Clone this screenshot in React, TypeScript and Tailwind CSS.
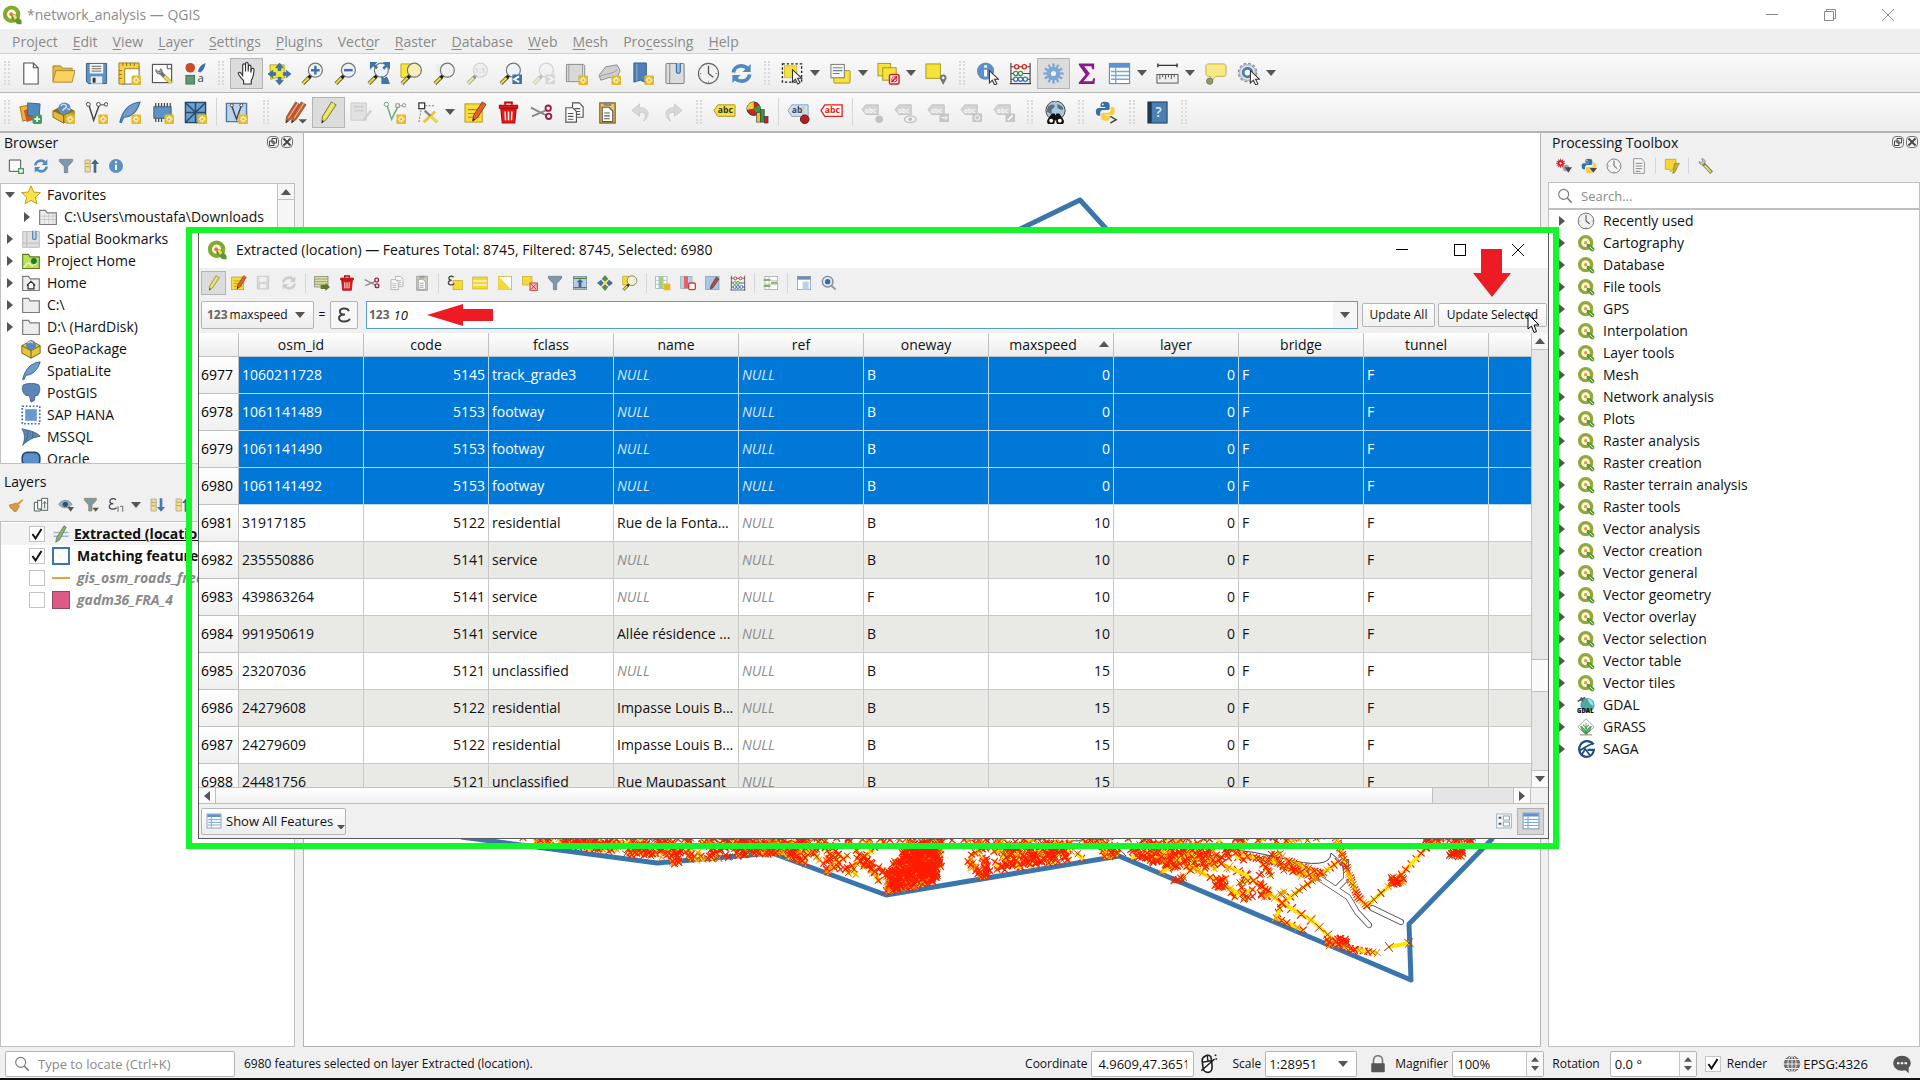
import React from "react";

type IconProps = { name: string; className?: string };

const Badge = () => (
  <g>
    <rect x="14" y="14" width="10" height="10" rx="1" fill="#e3b92e" />
    <path d="M19 15.5v7M15.5 19h7M16.8 16.8l4.4 4.4M21.2 16.8l-4.4 4.4" stroke="#fff9d8" strokeWidth="1.3" />
    <circle cx="19" cy="19" r="1.3" fill="#e3b92e" />
  </g>
);

const Lens = ({ fill = "#eef3f8", ring = "#777" }: { fill?: string; ring?: string }) => (
  <g>
    <path d="M2 22.5l7-7" stroke="#5c5a2a" strokeWidth="4" />
    <path d="M2 22.5l6-6" stroke="#e6dc4a" strokeWidth="2.2" />
    <path d="M8 16.5l3-3" stroke="#222" strokeWidth="3.4" />
    <circle cx="15" cy="8.5" r="7.3" fill={fill} stroke={ring} strokeWidth="1.3" />
  </g>
);

const GreyTag = ({ children }: { children?: React.ReactNode }) => (
  <g>
    <path d="M1 9l4-5h13v10H5z" fill="#d4d4d4" stroke="#c2c2c2" />
    <text x="4" y="12" fontSize="7" fontWeight="700" fill="#f4f4f4" fontFamily="Open Sans, sans-serif">abc</text>
    {children}
  </g>
);

const Gear = ({ cx = 12, cy = 12, r = 7, fill = "#7ea6d3" }: { cx?: number; cy?: number; r?: number; fill?: string }) => (
  <g stroke={fill} strokeWidth={r * 0.34} fill="none">
    {[0, 30, 60, 90, 120, 150].map((a) => (
      <path key={a} d={`M${cx - r * 1.5} ${cy}H${cx + r * 1.5}`} transform={`rotate(${a} ${cx} ${cy})`} />
    ))}
    <circle cx={cx} cy={cy} r={r} fill={fill} stroke="none" />
    <circle cx={cx} cy={cy} r={r * 0.38} fill="#f2f2f2" stroke="none" />
  </g>
);

const Refresh = ({ c = "#4f8ac0" }: { c?: string }) => (
  <g fill="none" stroke={c} strokeWidth="4">
    <path d="M3.500 11c.5-4 4-7 8.500-7 2.500 0 4.500 1 6 2.500" />
    <path d="M20.500 13c-.5 4-4 7-8.500 7-2.500 0-4.500-1-6-2.500" />
    <path d="M21.500 2v8.500H13z" fill={c} stroke="none" />
    <path d="M2.500 22v-8.500H11z" fill={c} stroke="none" />
  </g>
);

const Python = () => (
  <g>
    <path d="M11.500 1c-4 0-5 1.500-5 3.500V7H12v1H4C2 8 1 10 1 12.500S2 17 4 17h2v-3c0-2 1.500-3.500 3.500-3.500h5c1.500 0 2.500-1 2.500-2.500V4.500C17 2 15 1 11.500 1z" fill="#35709f" />
    <path d="M12.500 23c4 0 5-1.500 5-3.500V17H12v-1h8c2 0 3-2 3-4.500S22 7 20 7h-2v3c0 2-1.500 3.500-3.500 3.500h-5C8 13.500 7 14.500 7 16v3.500C7 22 9 23 12.500 23z" fill="#f7cf45" />
    <circle cx="9" cy="4" r="1" fill="#fff" />
  </g>
);

const Pencil = ({ c = "#e6dc4a" }: { c?: string }) => (
  <g>
    <path d="M15 1l5 3-10 15-5 4 .5-6.500z" fill={c} stroke="#6b6b3a" strokeWidth=".9" />
    <path d="M17.500 2.500l-10 15.500" stroke="#fff" strokeOpacity=".55" strokeWidth="1.200" />
    <path d="M5 23l.3-3.300 2.200 1.300z" fill="#333" />
  </g>
);

const FormPencil = () => (
  <g>
    <rect x="1" y="3" width="18" height="19" fill="#f7dd3c" stroke="#b79a1a" />
    <path d="M4 9h12M4 13h12M4 17h12" stroke="#a8901e" strokeWidth="1.200" />
    <path d="M19 1l4 2.500-9 14-5 3.500 1-6z" fill="#e2622a" stroke="#7c3415" strokeWidth=".9" />
    <path d="M9 21l.5-3 2 1.200z" fill="#222" />
  </g>
);

const Trash = () => (
  <g fill="none" stroke="#b00d0d" strokeWidth="1.200">
    <path d="M4 8h16l-1.500 15h-13z" fill="#e01b1b" />
    <path d="M2.500 4.500h19v3h-19z" fill="#e01b1b" />
    <path d="M8.500 4V1.500h7V4" strokeWidth="2" />
    <path d="M8.500 11l.4 9M12 11v9M15.500 11l-.4 9" stroke="#fff" strokeWidth="1.500" />
  </g>
);

const Scissors = () => (
  <g fill="none" strokeWidth="2">
    <path d="M1 7l16 8M2 16l14-6" stroke="#8a8a8a" />
    <circle cx="19" cy="7.500" r="2.800" stroke="#9c2148" />
    <circle cx="19.500" cy="16" r="2.800" stroke="#9c2148" />
  </g>
);

const Doc = ({ x, y, c = "#555" }: { x: number; y: number; c?: string }) => (
  <g stroke={c} strokeWidth="1.200" fill="#fff">
    <path d={`M${x} ${y}h7l4 4v11h-11z`} />
    <path d={`M${x + 2} ${y + 6}h6M${x + 2} ${y + 9}h6M${x + 2} ${y + 12}h6`} />
  </g>
);

const Folder = () => (
  <path d="M2 21V4h7l2 3h11v14z" fill="#ededed" stroke="#7c7c7c" strokeWidth="1.400" />
);

const Cursor = ({ x = 0, y = 0 }: { x?: number; y?: number }) => (
  <path transform={`translate(${x} ${y})`} d="M10 8v13l3-3 2.500 5 2.300-1.200-2.500-4.800h4.300z" fill="#fff" stroke="#333" strokeWidth="1.100" />
);

const icons: Record<string, React.ReactNode> = {
  qgis: (
    <g>
      <circle cx="11.500" cy="11" r="8" fill="#fdfbe6" stroke="#84a92f" strokeWidth="5" />
      <path d="M11 11l5.500.5 7 7.500v4h-5l-7-6.500z" fill="#5d9633" />
      <path d="M12 11.500l4 .5 2.500 3-3 3z" fill="#f2dc5a" />
      <circle cx="11" cy="11" r="2.200" fill="#e8703a" />
    </g>
  ),
  qgisSmall: (
    <g>
      <circle cx="11.500" cy="11.500" r="8" fill="#fdf6d8" stroke="#92a93a" strokeWidth="4.500" />
      <path d="M13 13l4.500.5 5.500 5.500v4h-4l-6-6z" fill="#5d9633" />
      <path d="M17 17l5 5" stroke="#e9efd0" strokeWidth="1.200" />
      <circle cx="11.500" cy="11.500" r="2.300" fill="#e79a4a" />
    </g>
  ),
  newDoc: <path d="M5 1h10l5 5v17H5zM15 1v5h5" fill="#fff" stroke="#555" strokeWidth="1.200" />,
  open: (
    <g stroke="#a88632" strokeWidth="1">
      <path d="M1 20V4h8l2 2.500h10V9" fill="#e8b93e" />
      <path d="M1 20l3-11h20l-3 12H1z" fill="#fbd25c" />
    </g>
  ),
  save: (
    <g>
      <path d="M1.500 1.500h21v21h-19l-2-2z" fill="#5b93c6" stroke="#3b5e80" />
      <rect x="5" y="2" width="14" height="10" fill="#f2f4f6" />
      <path d="M7 4.500h10M7 7h10M7 9.500h10" stroke="#666" />
      <rect x="6" y="15" width="12" height="7.500" fill="#e8edf2" />
      <rect x="8" y="16.500" width="3" height="5" fill="#333" />
    </g>
  ),
  saveGrey: (
    <g>
      <path d="M2 2h17v19H2z" fill="#d6d6d6" stroke="#c2c2c2" />
      <path d="M5 3h11v7H5zM6 14h9v6H6z" fill="#efefef" />
    </g>
  ),
  layout: (
    <g>
      <rect x="5" y="5" width="17" height="18" fill="#fff" stroke="#666" />
      <path d="M1 1h21v6H7v16H1z" fill="#f5cf48" stroke="#9c7e1b" />
      <path d="M5 1v3M9 1v3M13 1v3M17 1v3M1 9h3M1 13h3M1 17h3" stroke="#8a6c12" />
      <Badge />
    </g>
  ),
  layoutMgr: (
    <g>
      <rect x="1.500" y="2.500" width="20" height="19" fill="#fff" stroke="#555" strokeWidth="1.200" />
      <path d="M17 3v4h4" fill="none" stroke="#555" />
      <path d="M9 10l11 11" stroke="#777" strokeWidth="4" />
      <path d="M14 15l7 7" stroke="#e6dc4a" strokeWidth="3" />
      <path d="M5 8c0 4 3 5 5 4s2-4 0-5l-1 3-2-.5z" fill="#aaa" stroke="#666" />
    </g>
  ),
  style: (
    <g>
      <circle cx="6.500" cy="6" r="5" fill="#cc4a26" />
      <path d="M22.500 1c-5 2-7 5-8 9l2.500 1c3-2 5-5 5.500-10z" fill="#3f6fa5" />
      <rect x="2" y="14" width="9" height="9" fill="#5d9a78" stroke="#3d7355" />
      <text x="14" y="21" fontSize="12" fill="#444" fontFamily="Open Sans, sans-serif">a</text>
    </g>
  ),
  hand: (
    <path d="M8 14V3.500c0-2 3-2 3 0V10 2c0-2 2.800-2 2.800 0v8l.2-5.500c.2-1.800 2.700-1.600 2.700.2L16.500 11l.7-3.500c.5-1.500 2.800-1.200 2.600.5-.5 4-.3 8-2.800 11v4H9v-3.500C7 17.500 5 15 3.500 12.500c-.6-1.500 1.300-2.500 2.500-1.200z" fill="#fff" stroke="#333" strokeWidth="1.200" />
  ),
  panSel: (
    <g>
      <path d="M2 3h15v14l-7-1-7 2z" fill="#f5e63a" stroke="#b5a520" />
      <path d="M12 1l4 5h-2.500v3h-3V6H8zM12 24l4-5h-2.500v-3h-3v3H8zM24 12.500l-5-4V11h-3v3h3v2.500zM0 12.500l5-4V11h3v3H5v2.500z" fill="#3f74a8" stroke="#35628f" strokeWidth=".6" />
    </g>
  ),
  zoomIn: <g><Lens /><path d="M15 4v9M10.500 8.500h9" stroke="#3f74a8" strokeWidth="2.600" /></g>,
  zoomOut: <g><Lens /><path d="M10.500 8.500h9" stroke="#3f74a8" strokeWidth="2.600" /></g>,
  zoomFull: (
    <g>
      <Lens />
      <path d="M3 0h8l-2.500 2.500 3 3-2 2-3-3L3 8zM24 0v8l-3-3-3 3-2-2 3-3L16.500 0zM24 23h-9v-9l3 3 2-2 1.500 1.500z" fill="#3f74a8" />
    </g>
  ),
  zoomSel: <g><path d="M1 2h11v14H1z" fill="#f5e63a" stroke="#b5a520" /><Lens fill="#f6f0b8" /></g>,
  zoomLayer: <g><path d="M3 2h9l-3 14-6-1z" fill="#eee" /><Lens fill="#f0f0f0" /></g>,
  zoomNative: (
    <g opacity=".45"><Lens ring="#aaa" fill="#e6e6e6" /><text x="9" y="12" fontSize="8" fill="#888" fontFamily="Open Sans, sans-serif">1:1</text></g>
  ),
  zoomLast: <g><Lens /><rect x="14" y="13" width="10" height="10" fill="#3f74a8" /><path d="M21 15l-5 3 5 3" fill="none" stroke="#fff" strokeWidth="2" /></g>,
  zoomNext: <g opacity=".25"><Lens fill="#eee" /><rect x="14" y="13" width="10" height="10" fill="#888" /><path d="M17 15l5 3-5 3" fill="none" stroke="#fff" strokeWidth="2" /></g>,
  newMap: (
    <g><path d="M1.500 2.500h17v18h-17z" fill="#d8d8d8" stroke="#8a8a8a" /><path d="M4 3v17" stroke="#999" /><path d="M18.500 2.500l2 1v17" fill="none" stroke="#8a8a8a" /><Badge /></g>
  ),
  new3d: (
    <g><path d="M1 14l7-9 12-2 3 6-4 9-7-2-9 3z" fill="#cfcfcf" stroke="#8a8a8a" /><path d="M2 15c6-3 13-2 18-7" fill="none" stroke="#999" /><Badge /></g>
  ),
  bookmarkNew: (
    <g><path d="M3 1h13v21l-6-3-7 2z" fill="#4f7fb5" stroke="#39618e" /><path d="M6 2v18" stroke="#8fb0d3" /><Badge /></g>
  ),
  bookmark: (
    <g><rect x="2" y="1.500" width="19" height="21" rx="1" fill="#dcdcdc" stroke="#7c7c7c" /><path d="M6 2v20" stroke="#888" /><path d="M13 1v9c0 2.500 4 2.500 4 0V1" fill="#9cc1e6" stroke="#3f74a8" strokeWidth="1.300" /></g>
  ),
  clock: (
    <g><circle cx="12" cy="12" r="10.500" fill="#f2f2f2" stroke="#666" strokeWidth="1.200" /><path d="M12 4v8l5 4" fill="none" stroke="#555" strokeWidth="1.400" /><path d="M12 20v1.500M3 12h1.500M19.500 12H21" stroke="#777" /></g>
  ),
  refresh: <Refresh />,
  refreshGrey: <Refresh c="#cdcdcd" />,
  select: (
    <g><rect x="1.500" y="2" width="20" height="19" fill="none" stroke="#222" strokeWidth="1.400" strokeDasharray="2.500 2" /><rect x="3.500" y="4" width="13" height="12" fill="#f5e23a" stroke="#b5a520" strokeWidth=".6" /><Cursor x={2} /></g>
  ),
  selectValue: (
    <g><rect x="5" y="9" width="17" height="13" rx="1" fill="#f5e23a" stroke="#a8951b" /><rect x="2" y="2.500" width="14" height="14" fill="#f6f6f6" stroke="#777" /><path d="M4 6h10M4 9h10M4 12h7" stroke="#6d7fa5" strokeWidth="1.200" /></g>
  ),
  deselect: (
    <g stroke="#a8951b"><rect x="1" y="1.500" width="13" height="13" fill="#f5e23a" /><rect x="6" y="6" width="14" height="13" fill="#f5e23a" /><rect x="13" y="13" width="10" height="10" rx="2" fill="#fff" stroke="#c22" strokeWidth="1.500" /><path d="M15 21l6-6" stroke="#c22" strokeWidth="1.600" /><circle cx="18" cy="18" r="2.800" fill="none" stroke="#c22" /></g>
  ),
  selectLoc: (
    <g><rect x="1" y="2" width="15" height="15" fill="#f5e23a" stroke="#a8951b" /><path d="M19 24c-2-4-3.500-5.500-3.500-7.500a3.500 3.500 0 017 0c0 2-1.500 3.500-3.500 7.500z" fill="#777" /><circle cx="19" cy="16.500" r="1.400" fill="#fff" /></g>
  ),
  identify: (
    <g><circle cx="10" cy="9.500" r="9" fill="#5f8fc4" /><path d="M10 8v7M10 3.500v2.500" stroke="#fff" strokeWidth="3" /><Cursor x={4} y={1} /></g>
  ),
  abacus: (
    <g fill="none" stroke="#444" strokeWidth="1.200"><path d="M2 1v22M22 1v22M2 5h20M2 12h20M2 18h20M1 22.500h22" /><g strokeWidth="1.400"><circle cx="8" cy="5" r="2.200" stroke="#d22" fill="#fff" /><circle cx="16" cy="5" r="2.200" stroke="#d22" fill="#fff" /><circle cx="7" cy="12" r="2.200" stroke="#3a9b3a" fill="#fff" /><circle cx="12" cy="12" r="2.200" stroke="#3a9b3a" fill="#fff" /><circle cx="7" cy="18" r="2.200" stroke="#3b6fb5" fill="#fff" /><circle cx="12" cy="18" r="2.200" stroke="#3b6fb5" fill="#fff" /><circle cx="17" cy="18" r="2.200" stroke="#3b6fb5" fill="#fff" /></g></g>
  ),
  gear: <Gear r={7} />,
  sigma: <path d="M4 1.500h16v6h-2l-1-3H9.500l6 7.500-6.500 8H18l1.200-3H21l-.8 6H4v-1.500L11 13 4 3z" fill="#8a1a8a" />,
  table: (
    <g><rect x="1.500" y="1.500" width="21" height="21" fill="#fff" stroke="#6d8fb5" strokeWidth="1.200" /><rect x="2" y="2" width="20" height="4" fill="#5b93d6" /><path d="M8 6v16M3 10h19M3 14h19M3 18h19" stroke="#7ba6da" strokeWidth="1.500" /></g>
  ),
  measure: (
    <g><path d="M2 3.500h20M2 1.500v4M22 1.500v4" stroke="#333" strokeWidth="1.500" /><rect x="1" y="13" width="22" height="9" fill="#eee" stroke="#555" /><path d="M4 13v5M7 13v3M10 13v5M13 13v3M16 13v5M19 13v3" stroke="#555" /></g>
  ),
  tip: (
    <g><path d="M5 2h15c2 0 3 1 3 2.500V12c0 2-1 3-3 3h-8l-5 6v-6H5c-2 0-3-1-3-3V4.500C2 3 3 2 5 2z" fill="#f7ea86" stroke="#bfae45" /><circle cx="6" cy="20" r="3.300" fill="#8b9f5a" stroke="#777" /></g>
  ),
  action: (
    <g>
      <circle cx="11" cy="11" r="9.500" fill="#e4e7ea" stroke="#8d959d" strokeWidth="1.500" strokeDasharray="3 2" />
      <circle cx="11" cy="11" r="8.200" fill="none" stroke="#9aa3ab" />
      <circle cx="11" cy="11" r="4.500" fill="#fff" stroke="#4f7fb5" strokeWidth="3" />
      <Cursor x={4} y={1} />
    </g>
  ),
  dsm: (
    <g><path d="M1 6l11-2 2 14-10 3z" fill="#f0b33a" stroke="#a97714" /><path d="M5 10l9-3 3 12-9 3z" fill="#c9552b" /><path d="M9 2l13 1-1 14-12-2z" fill="#4f8ac0" stroke="#3a648c" /><rect x="14" y="14" width="10" height="10" rx="2" fill="#3f9b63" /><path d="M19 16v6M16 19h6" stroke="#fff" strokeWidth="1.800" /></g>
  ),
  geopkgNew: (
    <g><path d="M1 10l11-6 11 6-11 6z" fill="#8a6c12" /><circle cx="13" cy="8" r="6.500" fill="#5b8fc6" /><path d="M9 5c2-2 5-2 6 0s-3 3-4 5M16 8l3 1" stroke="#cfe2f3" strokeWidth="1.500" fill="none" /><path d="M1 10l11 5v8L1 17z" fill="#e5b93a" stroke="#8a6c12" /><path d="M23 10l-11 5v8l11-6z" fill="#c99e24" stroke="#8a6c12" /><Badge /></g>
  ),
  shape: <g><path d="M4 4l5 16 6-16" fill="none" stroke="#444" strokeWidth="1.500" /><path d="M15 4h7" stroke="#444" /><circle cx="3.500" cy="3.500" r="2" fill="#fff" stroke="#444" /><circle cx="14" cy="3.500" r="2" fill="#fff" stroke="#444" /><circle cx="22" cy="3.500" r="1.800" fill="#fff" stroke="#444" /><Badge /></g>,
  feather: <path d="M23 1C13 2 5 9 2 22l1.500.5L6 17c8 0 14-6 17-16z" fill="#6f9ccc" stroke="#3f6a94" strokeWidth="1.200" />,
  featherNew: <g><path d="M23 1C13 2 5 9 2 22l1.500.5L6 17c8 0 14-6 17-16z" fill="#6f9ccc" stroke="#3f6a94" strokeWidth="1.200" /><Badge /></g>,
  chip: <g><rect x="3" y="6" width="18" height="12" fill="#5b93c6" stroke="#3b5e80" /><path d="M5 6V2M8 6V2M11 6V2M14 6V2M17 6V2M20 6V2M5 22v-4M8 22v-4M11 22v-4" stroke="#444" strokeWidth="1.300" /><Badge /></g>,
  mesh: <g><rect x="1.500" y="1.500" width="21" height="21" fill="#6da0d0" stroke="#274a6b" strokeWidth="1.500" /><path d="M2 12h20M12 2v20M2 2l10 10M22 2L12 12M2 22l10-10" stroke="#274a6b" strokeWidth="1.500" /><Badge /></g>,
  virtual: <g><path d="M1.500 2.500h21v19h-21z" fill="#b8d4ee" stroke="#4f7aa3" strokeWidth="1.500" /><path d="M7 5l5 14 5-14" fill="none" stroke="#444" strokeWidth="1.500" /><circle cx="7" cy="4.500" r="1.600" fill="#fff" stroke="#444" /><circle cx="17" cy="4.500" r="1.600" fill="#fff" stroke="#444" /><Badge /></g>,
  pencils: <g><g transform="translate(-3 0)"><Pencil c="#d4552a" /></g><g transform="translate(3 0)"><Pencil c="#d4552a" /></g><path d="M15 19h9l-4.500 4.500z" fill="#555" /></g>,
  pencil: <Pencil />,
  saveEdits: <g><path d="M1 2h16v18H1z" fill="#e2e2e2" stroke="#cdcdcd" /><path d="M4 6h10M4 10h10" stroke="#cfcfcf" strokeWidth="2" /><path d="M21 9l2 2-8 9-3 1z" fill="#cfcfcf" /></g>,
  vertex: <g><path d="M4 4l5 15 7-14" fill="none" stroke="#6fae8c" strokeWidth="1.600" /><path d="M16 5h6" stroke="#999" /><circle cx="3.500" cy="3.500" r="2.200" fill="#fff" stroke="#5b9b78" /><rect x="13.500" y="3" width="3.500" height="3.500" fill="#fff" stroke="#888" /><circle cx="22" cy="4.500" r="1.800" fill="#fff" stroke="#888" /><Badge /></g>,
  vertexTool: <g><path d="M3 22L6 5h14" fill="none" stroke="#777" strokeDasharray="2 1.500" /><rect x="3" y="2" width="6" height="6" fill="#fff" stroke="#333" strokeWidth="1.300" /><path d="M8 22l12-11" stroke="#e6c93a" strokeWidth="3" /><path d="M9 10l13 12" stroke="#888" strokeWidth="2.600" /><path d="M15 16l7 6" stroke="#e6dc4a" strokeWidth="3" /></g>,
  form: <FormPencil />,
  trash: <Trash />,
  cut: <Scissors />,
  copy: <g><Doc x={10} y={2} /><Doc x={3} y={7} /></g>,
  copyGrey: <g opacity=".7"><Doc x={10} y={2} c="#888" /><Doc x={3} y={7} c="#888" /></g>,
  paste: <g><rect x="4" y="2" width="16" height="21" fill="#e8c75a" stroke="#7c6420" strokeWidth="1.300" /><rect x="8" y="1" width="8" height="4" fill="#888" /><Doc x={6.500} y={6.500} /></g>,
  pasteGrey: <g opacity=".75"><rect x="4" y="2" width="16" height="21" fill="#c9c4b0" stroke="#888" strokeWidth="1.300" /><rect x="8" y="1" width="8" height="4" fill="#888" /><Doc x={6.500} y={6.500} c="#777" /></g>,
  undo: <path d="M11 3L3 10l8 6v-4c6-1 8 3 4 9 7-5 7-14-4-14z" fill="#d8d8d8" stroke="#cbcbcb" />,
  redo: <path d="M13 3l8 7-8 6v-4c-6-1-8 3-4 9-7-5-7-14 4-14z" fill="#d8d8d8" stroke="#cbcbcb" />,
  labelY: <g><path d="M1 10l4-6h18v12H5z" fill="#f5e13a" stroke="#a8951b" /><text x="5" y="13" fontSize="9" fontWeight="700" fill="#333" fontFamily="Open Sans, sans-serif">abc</text></g>,
  diagram: <g><circle cx="8" cy="8" r="7" fill="#d32020" stroke="#333" /><path d="M8 8V1A7 7 0 001 9z" fill="#e9d23a" /><path d="M8 8l6-4a7 7 0 01-3 10z" fill="#2f9b3b" /><rect x="11" y="12" width="4" height="10" fill="#e9c22f" stroke="#333" strokeWidth=".6" /><rect x="15" y="9" width="4" height="13" fill="#2f9b3b" stroke="#333" strokeWidth=".6" /><rect x="19" y="16" width="4" height="7" fill="#d32020" stroke="#333" strokeWidth=".6" /></g>,
  labelPin: <g><path d="M1 10l4-6h17v12H5z" fill="#cfe0f2" stroke="#7ba0c8" /><text x="5" y="13" fontSize="9" fontWeight="700" fill="#444" fontFamily="Open Sans, sans-serif">ab</text><path d="M17 4v12" stroke="#ccc" strokeWidth="2.500" /><circle cx="18.500" cy="19" r="4.500" fill="#b32020" stroke="#701010" /></g>,
  labelR: <g><path d="M1 10l4-6h18v12H5z" fill="#fff" stroke="#e02020" strokeWidth="1.400" /><text x="5" y="13" fontSize="9" fontWeight="700" fill="#e02020" fontFamily="Open Sans, sans-serif">abc</text></g>,
  tag1: <GreyTag><circle cx="19" cy="19" r="4" fill="#c2c2c2" /></GreyTag>,
  tag2: <GreyTag><ellipse cx="17" cy="19" rx="6" ry="3.500" fill="#efefef" stroke="#c2c2c2" strokeWidth="1.500" /><circle cx="17" cy="19" r="1.800" fill="#bbb" /></GreyTag>,
  tag3: <GreyTag><rect x="13" y="13" width="10" height="9" fill="#c6c6c6" /><path d="M15 17.500h6m-2-2l2 2-2 2" stroke="#fff" fill="none" /></GreyTag>,
  tag4: <GreyTag><rect x="13" y="13" width="10" height="9" fill="#c6c6c6" /><circle cx="18" cy="17.500" r="2.500" stroke="#fff" fill="none" /></GreyTag>,
  tag5: <GreyTag><rect x="13" y="13" width="10" height="9" fill="#c6c6c6" /><path d="M15.500 20l5-5" stroke="#fff" strokeWidth="1.500" /></GreyTag>,
  globeSearch: <g><circle cx="12" cy="10" r="10" fill="#a9c6dd" stroke="#444" /><path d="M4 6c3-3 6-3 7-1s-4 3-3 6-3 2-5 0M14 3c3 1 6 3 6 5s-4 1-6-1z" fill="#5f6f78" /><path d="M8 13h3l1 2 1-2h3l4 6a4 4 0 11-7 1h-2a4 4 0 11-7-1z" fill="#111" /><circle cx="7.500" cy="20.500" r="2" fill="#fff" /><circle cx="16.500" cy="20.500" r="2" fill="#fff" /></g>,
  python: <g><g transform="scale(.9)"><Python /></g><path d="M16 16l6 3.500-6 3.500" fill="none" stroke="#444" strokeWidth="1.500" /></g>,
  pythonSmall: <g><Python /><path d="M13 15h11l-5.500 7z" fill="#4a4a4a" /></g>,
  help: <g><rect x="2" y="1" width="20" height="22" fill="#4a80b5" stroke="#22384d" /><path d="M2 1h4v22H2z" fill="#22384d" /><text x="10" y="17" fontSize="14" fontWeight="600" fill="#e5eef7" fontFamily="Open Sans, sans-serif">?</text></g>,
  addLayer: <g><path d="M2 3h17v17H2z" fill="#fafafa" stroke="#4d5a52" strokeWidth="1.500" /><rect x="16" y="16" width="7" height="7" fill="#fff" stroke="#4f9b63" strokeWidth="2" /></g>,
  filter: <path d="M2 2h20v3l-7.500 8v9h-5v-9L2 5z" fill="#7f97ad" stroke="#64798d" />,
  filterArrow: <g><path d="M2 2h18v3l-6.500 7v9h-5v-9L2 5z" fill="#7f97ad" stroke="#8b8b45" /><path d="M14 16h10l-5 6z" fill="#555" /></g>,
  collapse: <g><path d="M3 3h8v18H3z" fill="#f3df84" stroke="#999" /><path d="M4 8h6M4 13h6" stroke="#888" /><path d="M16 22V9h-4l6-7 6 7h-4v13z" fill="#46678c" /></g>,
  expand: <g><path d="M3 3h8v18H3z" fill="#f3df84" stroke="#999" /><path d="M4 8h6M4 13h6" stroke="#888" /><path d="M16 2v13h-4l6 7 6-7h-4V2z" fill="#4a76ac" /></g>,
  info: <g><circle cx="12" cy="12" r="10.500" fill="#5b90c6" /><path d="M12 10v8M12 5v3" stroke="#fff" strokeWidth="3" /></g>,
  star: <path d="M12 1l3.300 7.500 8 .7-6 5.400 1.800 8L12 18.500l-7.100 4.100 1.800-8-6-5.400 8-.7z" fill="#fbe24a" stroke="#b29a1c" strokeWidth="1.100" />,
  folder: <Folder />,
  folderLines: <g><Folder /><path d="M3 11h18M3 15h18M8 8v12M13 8v12M18 8v12" stroke="#c4c4c4" /></g>,
  projHome: <g><path d="M2 21V4h7l2 3h11v14z" fill="#b8e05a" stroke="#5c7a2a" strokeWidth="1.300" /><path d="M3 20l6-6 4 4 6-3" stroke="#f3f3c0" strokeWidth="1.500" fill="none" /><circle cx="15.500" cy="12" r="3.500" fill="#1f7a2a" /></g>,
  home: <g><Folder /><path d="M7 15l5-5 5 5M8.500 14v5h7v-5" fill="#fff" stroke="#333" strokeWidth="1.500" /></g>,
  spatialBm: <g><path d="M2 3h20v19H2z" fill="#dedede" stroke="#b5b5b5" /><path d="M7 4v17M2 17h20" stroke="#b5b5b5" /><path d="M14 2v9c0 2 4 2 4 0V2" fill="#bfd6ee" stroke="#5c86b5" strokeWidth="1.500" /></g>,
  cube: <g><path d="M1 8l11-6 11 6v9l-11 6L1 17z" fill="#e5c53a" stroke="#5d5215" /><path d="M12 14v9M1 8l11 6 11-6" stroke="#5d5215" fill="none" /><circle cx="12" cy="7.500" r="6" fill="#5a86b8" /><path d="M8 5c2-2 5-2 6 0" stroke="#d6e4f2" fill="none" strokeWidth="1.500" /></g>,
  elephant: <path d="M3 2c6-2 13-2 18 0 3 4 1 10-1 13h-3l-1 6-4 2-2-8H6C2 12 0 6 3 2z" fill="#5b86b5" stroke="#3a5d84" />,
  sap: <g><rect x="5" y="5" width="14" height="14" fill="#6a9bd0" /><rect x="1.500" y="1.500" width="21" height="21" fill="none" stroke="#3b6aa0" strokeWidth="2" strokeDasharray="2 2.200" /></g>,
  mssql: <g><path d="M1 2c5 2 15 2 22 9l-8 2c-5 2-9 5-13 9 3-7 3-14-1-20z" fill="#5b86b5" stroke="#3a5d84" /><path d="M8 4c1 5 0 9-3 14M14 6c1 3 0 5-1 8" stroke="#3a5d84" fill="none" /></g>,
  oracle: <rect x="1.500" y="4" width="21" height="16" rx="6" fill="#5b90c8" stroke="#274a75" strokeWidth="2" />,
  brush: <g><path d="M14 9l8-6 1 2-7 7z" fill="#d39a3a" /><path d="M2 12l11-3 4 5-5 8-4-1-1-3-3-1z" fill="#e0973f" stroke="#b0702a" /></g>,
  groups: <g fill="#f7f7f7" stroke="#4d5a52" strokeWidth="1.400"><path d="M2 8h9v13H2z" /><path d="M7 5h9v13H7z" /><path d="M13 2h9v18h-9z" /><path d="M17.500 17V7M15 10l2.500-3 2.500 3" /></g>,
  eye: <g><path d="M1 11C6 3 16 3 21 11 16 18 6 18 1 11z" fill="#9ab0c4" stroke="#6d7a86" /><circle cx="11" cy="11" r="4" fill="#2f4f74" /><path d="M14 15h10l-5 7z" fill="#555" /></g>,
  eps: <g><path d="M12 4C8 1 2 3 3 7c0 2 2 3 5 3-4 0-6 2-6 4.500C2 18 8 20 13 16" fill="none" stroke="#444" strokeWidth="1.800" /><path d="M15 22v-8M18 14h4v8" fill="none" stroke="#888" strokeWidth="2" /></g>,
  toolGear: <g><Gear cx={7} cy={8} r={4.500} fill="#d81f2a" /><circle cx="15" cy="15" r="5" fill="#9aa4ad" /><path d="M13 14h11l-5.500 8z" fill="#4a4a4a" /></g>,
  log: <g><path d="M4 1h12l4 5v17H4z" fill="#f5f5f5" stroke="#888" strokeWidth="1.300" /><path d="M7 8h10M7 12h10M7 16h10M7 20h7" stroke="#888" strokeWidth="1.500" /></g>,
  editPlace: <g><path d="M2 2h16v15h-6l-2 4-2-4H2z" fill="#f4d436" stroke="#bf9a1a" /><path d="M16 8h7l-7 14-3 1z" fill="#c8b02c" stroke="#8f7a1c" /></g>,
  wrench: <g><path d="M3 5c0 4 3 6 6 5l3-3C13 4 11 1 7 1l2 4-3 2z" fill="#c8c8c8" stroke="#777" /><path d="M10 9l12 13" stroke="#77775a" strokeWidth="5.500" /><path d="M11.500 11L21 21.500" stroke="#dfe26a" strokeWidth="3" /></g>,
  search: <g fill="none" stroke="#777" strokeWidth="1.700"><circle cx="10" cy="9.500" r="7.500" /><path d="M15.500 15l6.500 7" strokeWidth="2.300" /></g>,
  gdal: <g><circle cx="14" cy="12" r="9.500" fill="#4fa8a8" /><path d="M14 3c6 1 8 6 8 10-3-1-6-3-8-10z" fill="#a9dde0" /><path d="M1 7l10-5M5 2l3 5" stroke="#555" strokeWidth="2.300" /><text x="0" y="22" fontSize="8" fontWeight="800" fill="#111" fontFamily="Open Sans, sans-serif">GDAL</text></g>,
  grass: <g><path d="M12 1l11 11-11 10L1 12z" fill="#fff" stroke="#8a8a8a" /><path d="M12 21V6M12 21C11 15 8 12 5 11c1 5 3 8 7 10 4-2 6-5 7-10-3 1-6 4-7 10M12 15c-1-4-2-5-4-6M12 15c1-4 2-5 4-6" fill="#63b45a" stroke="#2f8a35" /><path d="M4 22.500h16" stroke="#555" /></g>,
  saga: <g fill="none" stroke="#1f5080" strokeWidth="3"><path d="M22 6A10.500 10.500 0 1012 22.500c6 0 10-4 10.500-9.500H14" /><path d="M3 14C8 12 12 8 20 5M6 20l5-8 6 8" strokeWidth="2.300" /></g>,
  lineEdit: <g><path d="M2 10h20M2 15h20" stroke="#9bb5cf" strokeWidth="2" /><path d="M16 1l3 2-9 17-5 3 1-6z" fill="#8fae72" stroke="#5c7a4c" /></g>,
  multiEdit: <g><rect x="1" y="2" width="20" height="16" fill="#d9dfa5" stroke="#777" /><path d="M1 6h20M1 10h20M1 14h20" stroke="#8a8a4a" /><path d="M10 15h7v-3l7 6-7 6v-3h-7z" fill="#5c7a2a" /></g>,
  epsSel: <g><rect x="9" y="8" width="14" height="14" fill="#f5d93a" stroke="#c9a71b" /><path d="M10 3C7 1 2 2 3 5c0 2 1 3 4 3-3 0-5 1-5 4 0 3 5 4 9 1" fill="none" stroke="#444" strokeWidth="2" /></g>,
  selAll: <g><rect x="1" y="3" width="22" height="18" fill="#f5d93a" /><path d="M1 9h22M1 15h22" stroke="#fff7c4" strokeWidth="2" /><path d="M1 3h22v18H1z" fill="none" stroke="#c9a71b" /></g>,
  invert: <g><rect x="2" y="2" width="20" height="20" fill="#fff" stroke="#c9a71b" /><path d="M2 2l20 20H2z" fill="#f5d93a" /></g>,
  deselSmall: <g><rect x="1" y="2" width="14" height="13" fill="#f5d93a" stroke="#c9a71b" /><rect x="12" y="12" width="11" height="11" fill="#f7b8b8" stroke="#d43a3a" strokeWidth="1.500" /><path d="M14 14l7 7M21 14l-7 7" stroke="#d43a3a" strokeWidth="1.500" /></g>,
  moveTop: <g><rect x="2" y="2" width="20" height="20" fill="#b8cde2" stroke="#64839f" /><path d="M2 5h20M2 19h20" stroke="#5d7f3c" strokeWidth="2" /><path d="M12 6l5 5h-3v7h-4v-7H7z" fill="#3a6496" /></g>,
  panRow: <g><path d="M12 0l5 6-5 4-5-4zM12 24l5-6-5-4-5 4z" fill="#5c8a4a" /><path d="M24 12l-6 5-4-5 4-5zM0 12l6 5 4-5-4-5z" fill="#4d6f94" /><circle cx="12" cy="12" r="3" fill="#e4d95a" /></g>,
  zoomRow: <g><path d="M1 2h10v13H1z" fill="#f5d93a" stroke="#b5a520" /><Lens fill="#f4f0d0" /></g>,
  newField: <g><rect x="1" y="2" width="17" height="18" fill="#fff" stroke="#8aa" /><path d="M6 2v18M12 2v18M1 8h17M1 14h17" stroke="#8ab" /><path d="M6 2h6v18H6z" fill="#a7cc7a" /><rect x="13" y="13" width="10" height="10" fill="#e3b92e" /></g>,
  delField: <g><rect x="1" y="2" width="17" height="18" fill="#b8d0ea" stroke="#8aa" /><path d="M6 2h6v18H6z" fill="#e86060" /><rect x="13" y="12" width="10" height="10" rx="2" fill="#fff" stroke="#d43a3a" strokeWidth="2" /></g>,
  editField: <g><rect x="1" y="2" width="20" height="20" fill="#a9c6e6" stroke="#7b98b5" /><path d="M17 3l4 3-9 13-4 2 1-5z" fill="#b84a3a" stroke="#5a2d24" /></g>,
  dock: <g><rect x="3" y="2" width="19" height="20" fill="#fff" stroke="#999" /><path d="M3 8h19M3 14h19M9 2v20" stroke="#aaa" /><path d="M1 6h10v3H1zM12 10h9v3h-9zM1 15h10v3H1z" fill="#8aab6a" /></g>,
  condFmt: <g><rect x="2" y="2" width="20" height="20" fill="#fff" stroke="#889" /><rect x="2" y="2" width="20" height="5" fill="#6c8fb8" /><rect x="10" y="10" width="9" height="12" fill="#b8d0ea" /></g>,
  zoomAct: <g><circle cx="10" cy="10" r="8" fill="#dfe8f2" stroke="#7c8a99" strokeWidth="2" /><circle cx="10" cy="10" r="4" fill="#3a6aa5" /><path d="M15 15l7 7" stroke="#999" strokeWidth="3" /></g>,
  formView: <g><rect x="1" y="1.500" width="22" height="21" fill="#f4f8fb" stroke="#93aabd" strokeWidth="1.300" /><path d="M4 7h4M4 16h4" stroke="#556" strokeWidth="3" /><rect x="11" y="4.500" width="9" height="6" fill="#fff" stroke="#8aa4b9" strokeWidth="1.500" /><rect x="11" y="13.500" width="9" height="6" fill="#fff" stroke="#8aa4b9" strokeWidth="1.500" /></g>,
  mouse: <g><path d="M8 3c4-3 8-1 8 3l1 9c0 4-2 7-5 7s-6-2-6-6l-1-8c0-2 1-4 3-5z" fill="#fff" stroke="#222" strokeWidth="2" /><path d="M5 10l11-2M11 1l1 8M4 20l16-14M20 2l2-1M21 6h2" stroke="#222" strokeWidth="1.800" /></g>,
  lock: <g><path d="M6 12V7c0-8 12-8 12 0v5" fill="none" stroke="#777" strokeWidth="2.200" /><rect x="3" y="11" width="18" height="12" rx="1" fill="#555" /></g>,
  globe: <g><circle cx="12" cy="12" r="11" fill="#6f6f6f" /><path d="M1 12h22M12 1v22M3 6h18M3 18h18" stroke="#efefef" strokeWidth="1.300" /><ellipse cx="12" cy="12" rx="5.500" ry="11" fill="none" stroke="#efefef" strokeWidth="1.300" /></g>,
  bubble: <g><path d="M12 2c6 0 10.500 4 10.500 9 0 2-1 4-2.500 5.500V23l-4-3.500c-1 .3-2.500.5-4 .5-6 0-10.500-4-10.500-9S6 2 12 2z" fill="#555" /><path d="M6 11h3M10.500 11h3M15 11h3" stroke="#fff" strokeWidth="2.500" /></g>,
};

const Icon = ({ name, className = "size-6" }: IconProps) => (
  <svg viewBox="0 0 24 24" aria-hidden="true" className={`shrink-0 ${className}`}>
    {icons[name]}
  </svg>
);

const Down = ({ className = "w-2.5" }: { className?: string }) => (
  <svg viewBox="0 0 10 6" aria-hidden="true" className={`shrink-0 ${className}`}>
    <path d="M0 0h10L5 6z" fill="#555" />
  </svg>
);
const Up = () => (
  <svg viewBox="0 0 10 6" aria-hidden="true" className="w-2.5 shrink-0">
    <path d="M0 6h10L5 0z" fill="#555" />
  </svg>
);
const Right = () => (
  <svg viewBox="0 0 6 10" aria-hidden="true" className="w-1.5 shrink-0">
    <path d="M0 0v10l6-5z" fill="#555" />
  </svg>
);
const Left = () => (
  <svg viewBox="0 0 6 10" aria-hidden="true" className="w-1.5 shrink-0">
    <path d="M6 0v10L0 5z" fill="#555" />
  </svg>
);

const Handle = ({ className = "w-4" }: { className?: string }) => (
  <div className={`flex h-6 shrink-0 justify-center gap-0.5 ${className}`}>
    <div className="border-l-2 border-dotted border-[#dadada]" />
    <div className="border-l-2 border-dotted border-[#dadada]" />
  </div>
);
const Sep = ({ className = "h-7 w-2" }: { className?: string }) => (
  <div className={`flex shrink-0 justify-center ${className}`}>
    <div className="w-px bg-[#d6d6d6]" />
  </div>
);

const Tool = ({ name, menu, active }: { name: string; menu?: boolean; active?: boolean }) => (
  <button type="button" aria-label={name} className={`flex h-full shrink-0 items-center ${menu ? "w-12 gap-px" : "w-[33px]"}`}>
    <span className={`flex h-[31px] w-[33px] shrink-0 items-center justify-center ${active ? "border border-[#b4b4b4] bg-[#dcdcdc]" : ""}`}>
      <Icon name={name} className="size-[23px]" />
    </span>
    {menu && <Down />}
  </button>
);

const SmallTool = ({ name, active, label }: { name: string; active?: boolean; label?: string }) => (
  <button
    type="button"
    aria-label={label ?? name}
    className={`flex h-6 w-[25px] shrink-0 items-center justify-center ${active ? "border border-[#b4b4b4] bg-[#dcdcdc]" : ""}`}
  >
    <Icon name={name} className="size-4" />
  </button>
);

const menus: [string, number][] = [
  ["Project", 3], ["Edit", 0], ["View", 0], ["Layer", 0], ["Settings", 0], ["Plugins", 0], ["Vector", 4],
  ["Raster", 0], ["Database", 0], ["Web", 0], ["Mesh", 0], ["Processing", 3], ["Help", 0],
];

const panelIcon = (kind: "float" | "close") => (
  <button type="button" aria-label={kind} className="flex size-3 items-center justify-center rounded-sm border border-[#777]">
    <svg viewBox="0 0 10 10" className="size-2.5" fill="none" stroke="#444" strokeWidth="1">
      {kind === "float" ? <path d="M4 1.500h4.500V6H4zM1.500 4H6v4.500H1.500z" /> : <path d="M1.500 1.500l7 7M8.500 1.500l-7 7" strokeWidth="1.800" />}
    </svg>
  </button>
);

const PanelTitle = ({ children, buttons = true }: { children: string; buttons?: boolean }) => (
  <div className="flex h-5 shrink-0 items-center justify-between pl-1 pr-0.5">
    <h2>{children}</h2>
    {buttons && (
      <div className="flex gap-0.5 pb-0.5">
        {panelIcon("float")}
        {panelIcon("close")}
      </div>
    )}
  </div>
);

const browserItems: { icon: string; text: string; arrow?: "down" | "right"; child?: boolean }[] = [
  { icon: "star", text: "Favorites", arrow: "down" },
  { icon: "folderLines", text: "C:\\Users\\moustafa\\Downloads", arrow: "right", child: true },
  { icon: "spatialBm", text: "Spatial Bookmarks", arrow: "right" },
  { icon: "projHome", text: "Project Home", arrow: "right" },
  { icon: "home", text: "Home", arrow: "right" },
  { icon: "folder", text: "C:\\", arrow: "right" },
  { icon: "folder", text: "D:\\ (HardDisk)", arrow: "right" },
  { icon: "cube", text: "GeoPackage" },
  { icon: "feather", text: "SpatiaLite" },
  { icon: "elephant", text: "PostGIS" },
  { icon: "sap", text: "SAP HANA" },
  { icon: "mssql", text: "MSSQL" },
  { icon: "oracle", text: "Oracle" },
];

const toolboxItems: [string, string][] = [
  ["clock", "Recently used"], ["qgisSmall", "Cartography"], ["qgisSmall", "Database"], ["qgisSmall", "File tools"],
  ["qgisSmall", "GPS"], ["qgisSmall", "Interpolation"], ["qgisSmall", "Layer tools"], ["qgisSmall", "Mesh"],
  ["qgisSmall", "Network analysis"], ["qgisSmall", "Plots"], ["qgisSmall", "Raster analysis"],
  ["qgisSmall", "Raster creation"], ["qgisSmall", "Raster terrain analysis"], ["qgisSmall", "Raster tools"],
  ["qgisSmall", "Vector analysis"], ["qgisSmall", "Vector creation"], ["qgisSmall", "Vector general"],
  ["qgisSmall", "Vector geometry"], ["qgisSmall", "Vector overlay"], ["qgisSmall", "Vector selection"],
  ["qgisSmall", "Vector table"], ["qgisSmall", "Vector tiles"], ["gdal", "GDAL"], ["grass", "GRASS"], ["saga", "SAGA"],
];

const layers = [
  { text: "Extracted (location)", on: true, kind: "edit" },
  { text: "Matching features", on: true, kind: "outline" },
  { text: "gis_osm_roads_free_1", on: false, kind: "line" },
  { text: "gadm36_FRA_4", on: false, kind: "fill" },
];

const Tick = ({ on, label }: { on: boolean; label: string }) => (
  <span className="relative flex size-4 shrink-0">
    <input
      type="checkbox"
      defaultChecked={on}
      aria-label={label}
      className="peer size-4 appearance-none border border-[#c4c4c4] bg-white"
    />
    <svg viewBox="0 0 16 16" className="pointer-events-none absolute inset-0 hidden peer-checked:block" fill="none" stroke="#111" strokeWidth="2">
      <path d="M3.500 8l3 4.500L12.500 3" />
    </svg>
  </span>
);

/* ---------- map drawing ---------- */

let seed = 11;
const rnd = () => {
  seed = (seed * 16807) % 2147483647;
  return seed / 2147483647;
};

type Pt = [number, number];
const boundary: Pt[] = [
  [460, 837], [656, 863], [771, 853], [885, 895], [1118, 856], [1410, 980], [1408, 924], [1492, 838],
];
const edgeY = (x: number) => {
  for (let i = 0; i < 5; i++) {
    const [a, b] = boundary[i];
    const [c, d] = boundary[i + 1];
    if (x >= a && x <= c) return b + ((d - b) * (x - a)) / (c - a);
  }
  return 838;
};

const marks = { under: "", red: "", dark: "", orange: "" };
const cross = (x: number, y: number, s: number) => {
  const r = rnd();
  const key = r < 0.3 ? "under" : r < 0.62 ? "red" : r < 0.8 ? "dark" : "orange";
  const t = rnd() * 0.7;
  const a = s * (1 - t * 0.4);
  const b = s * (0.7 + t * 0.5);
  marks[key] += `M${(x - a).toFixed(1)} ${(y - b).toFixed(1)}l${(2 * a).toFixed(1)} ${(2 * b).toFixed(1)}M${(x + b).toFixed(1)} ${(y - a).toFixed(1)}l${(-2 * b).toFixed(1)} ${(2 * a).toFixed(1)}`;
};

let lowerStreets = "";
let upperStreets = "";
/* Short streets with node markers, kept between the two limits of an area. */
const area = (x0: number, x1: number, top: (x: number) => number, bottom: (x: number) => number, count: number, gap = 4, yellow = 0.3) => {
  for (let i = 0; i < count; i++) {
    const x = x0 + rnd() * (x1 - x0);
    const y = top(x) + rnd() * Math.max(0, bottom(x) - top(x));
    const dir = (rnd() < 0.5 ? -0.7 : 0.8) + rnd() * 0.5;
    const len = 8 + rnd() * 18;
    const upper = rnd() < yellow;
    let line = "";
    for (let k = 0; k < len; k += gap) {
      const px = x + Math.cos(dir) * k;
      const py = y + Math.sin(dir) * k;
      if (px > x1 || py < top(px) || py > bottom(px)) break;
      line += `${line ? "L" : "M"}${px.toFixed(1)} ${py.toFixed(1)}`;
      cross(px, py, 3.8);
    }
    if (upper) upperStreets += line;
    else lowerStreets += line;
  }
};
const at = (y: number) => () => y;
area(522, 850, at(834), at(842), 90);
area(850, 1120, at(834), at(842), 50, 5);
area(1120, 1330, at(834), at(842), 36, 5);
area(562, 676, at(840), (x) => edgeY(x) - 5, 46);
area(664, 680, at(850), at(864), 8, 3, 0);
area(684, 775, at(840), (x) => edgeY(x) + 1, 44);
area(775, 838, at(842), (x) => edgeY(x) - 1, 28, 4, 0.4);
area(838, 882, at(842), (x) => edgeY(x) - 8, 15, 5, 0.4);
area(885, 936, (x) => Math.max(842, 876 - (x - 884) * 1.6), (x) => Math.min(edgeY(x) - 3, 894 - Math.max(0, x - 915) * 0.7), 105, 3, 0.05);
area(900, 940, at(842), (x) => 882 - Math.abs(x - 920) * 0.5, 34, 3, 0.1);
area(967, 986, (x) => 840 + Math.abs(x - 975) * 0.3, (x) => 866 + (x - 967) * 0.9, 18, 4, 0.3);
area(988, 1072, at(842), (x) => edgeY(x) - 4, 72, 5, 0.6);
area(1072, 1118, at(842), (x) => edgeY(x) - 1, 12, 6, 0.5);
area(1130, 1205, at(842), (x) => 858 + (x - 1130) * 0.22, 42, 5);
area(1160, 1228, at(850), (x) => 866 + (x - 1160) * 0.1, 16, 5, 0.4);
area(1205, 1250, at(846), at(860), 12, 5);
area(1258, 1285, at(852), at(876), 9, 5);
area(1230, 1252, at(880), at(900), 7, 5, 0.5);
area(1258, 1284, at(880), at(898), 9, 4);
area(1422, 1472, at(834), at(841), 30, 3, 0);
area(1447, 1462, at(850), at(857), 10, 2, 0);
area(1172, 1184, at(872), at(882), 6, 3, 0);
area(1214, 1226, at(878), at(888), 8, 3, 0);
area(1324, 1346, at(938), at(946), 14, 3, 0);
area(1388, 1404, at(877), at(884), 8, 3, 0);

const roads: { pts: Pt[]; gap: number; size: number }[] = [
  { pts: [[1335, 838], [1342, 857], [1350, 880], [1357, 897], [1366, 906]], gap: 2.5, size: 4 },
  { pts: [[1366, 906], [1380, 893], [1395, 880], [1425, 848], [1435, 838]], gap: 7, size: 4 },
  { pts: [[1240, 855], [1274, 862], [1317, 878]], gap: 3, size: 4 },
  { pts: [[1285, 860], [1322, 874]], gap: 3, size: 4 },
  { pts: [[1315, 878], [1337, 862]], gap: 4, size: 4 },
  { pts: [[1315, 878], [1281, 903]], gap: 5, size: 4 },
  { pts: [[1178, 853], [1192, 868], [1218, 882], [1240, 895]], gap: 9, size: 4 },
  { pts: [[1204, 856], [1245, 875], [1281, 903], [1310, 920], [1335, 942], [1352, 950]], gap: 9, size: 5 },
  { pts: [[1268, 858], [1300, 876]], gap: 8, size: 4 },
  { pts: [[1281, 903], [1275, 918], [1302, 930]], gap: 5, size: 4 },
  { pts: [[1345, 948], [1376, 953]], gap: 4, size: 4 },
  { pts: [[1388, 947], [1408, 943]], gap: 12, size: 5 },
  { pts: [[1160, 872], [1176, 865], [1192, 850]], gap: 6, size: 4 },
];
let roadPath = "";
roads.forEach(({ pts, gap, size }) => {
  roadPath += "M" + pts.map((p) => p.join(" ")).join("L");
  for (let i = 0; i < pts.length - 1; i++) {
    const [a, b] = pts[i];
    const [c, d] = pts[i + 1];
    const n = Math.max(1, Math.floor(Math.hypot(c - a, d - b) / gap));
    for (let k = 0; k <= n; k++) cross(a + ((c - a) * k) / n, b + ((d - b) * k) / n, size);
  }
});

const casing = "M1318 878L1347 897L1356 912L1368 925M1337 887L1345 879V862M1371 908L1400 922";

const MapCanvas = () => (
  <svg aria-label="Map canvas" className="size-full" fill="none">
    <g transform="translate(-303 -133)">
      <path d="M980 248L1079 200L1130 256" stroke="#3a76ab" strokeWidth="5" strokeLinejoin="round" />
      <path d={"M" + boundary.map((p) => p.join(" ")).join("L")} stroke="#3a76ab" strokeWidth="5" strokeLinejoin="round" />
      <path d="M1060 842Q1110 836 1125 856M1160 848Q1230 845 1280 858T1330 853Q1345 864 1344 878" stroke="#444" />
      <path d={casing} stroke="#444" strokeWidth="6" strokeLinecap="round" strokeLinejoin="round" />
      <path d={casing} stroke="#fff" strokeWidth="4.500" strokeLinecap="round" strokeLinejoin="round" />
      <path d={lowerStreets} stroke="#ffd500" strokeWidth="4" strokeLinecap="square" />
      <path d={marks.under} stroke="#ff1a00" strokeWidth="1.200" />
      <path d={upperStreets} stroke="#ffe600" strokeWidth="4" strokeLinecap="square" />
      <path d={roadPath} stroke="#ffe600" strokeWidth="4" strokeLinejoin="round" />
      <path d={marks.dark} stroke="#a83c00" strokeWidth="1" />
      <path d={marks.orange} stroke="#ff8a00" strokeWidth="1" />
      <path d={marks.red} stroke="#ff1a00" strokeWidth="1.200" />
    </g>
  </svg>
);

/* ---------- attribute table ---------- */

const columns = ["osm_id", "code", "fclass", "name", "ref", "oneway", "maxspeed", "layer", "bridge", "tunnel"];
type Row = { n: number; sel?: boolean; v: (string | null)[] };
const row = (n: number, id: string, code: string, fclass: string, name: string | null, oneway: string, speed: string, sel = false): Row => ({
  n, sel, v: [id, code, fclass, name, null, oneway, speed, "0", "F", "F"],
});
const rows: Row[] = [
  row(6977, "1060211728", "5145", "track_grade3", null, "B", "0", true),
  row(6978, "1061141489", "5153", "footway", null, "B", "0", true),
  row(6979, "1061141490", "5153", "footway", null, "B", "0", true),
  row(6980, "1061141492", "5153", "footway", null, "B", "0", true),
  row(6981, "31917185", "5122", "residential", "Rue de la Fonta...", "B", "10"),
  row(6982, "235550886", "5141", "service", null, "B", "10"),
  row(6983, "439863264", "5141", "service", null, "F", "10"),
  row(6984, "991950619", "5141", "service", "Allée résidence ...", "B", "10"),
  row(6985, "23207036", "5121", "unclassified", null, "B", "15"),
  row(6986, "24279608", "5122", "residential", "Impasse Louis B...", "B", "15"),
  row(6987, "24279609", "5122", "residential", "Impasse Louis B...", "B", "15"),
  row(6988, "24481756", "5121", "unclassified", "Rue Maupassant", "B", "15"),
];
const numeric = new Set([1, 6, 7]);

const AttributeTable = () => (
  <table className="w-full table-fixed border-separate border-spacing-0">
    <colgroup>
      <col className="w-10" />
      {columns.map((c) => (
        <col key={c} className="w-[125px]" />
      ))}
      <col />
    </colgroup>
    <thead>
      <tr className="h-6 bg-linear-to-b from-white to-[#ebebeb]">
        <th aria-label="Row" className="border-b border-r border-[#c0c0c0]" />
        {columns.map((c) => (
          <th
            key={c}
            scope="col"
            className={`relative border-b border-r border-[#c0c0c0] p-0 text-center font-normal ${c === "maxspeed" ? "pr-4" : ""}`}
          >
            {c}
            {c === "maxspeed" && (
              <span className="absolute right-1 top-2">
                <svg viewBox="0 0 10 6" className="w-2.5" aria-hidden="true">
                  <path d="M0 6h10L5 0z" fill="#555" />
                </svg>
              </span>
            )}
          </th>
        ))}
        <th aria-label="More" className="border-b border-[#c0c0c0]" />
      </tr>
    </thead>
    <tbody>
      {rows.map((r, i) => (
        <tr key={r.n} className={`h-[37px] ${r.sel ? "bg-[#0078d7] text-white" : i % 2 ? "bg-[#e9e9e6]" : "bg-white"}`}>
          <th scope="row" className="border-b border-r border-[#c0c0c0] bg-linear-to-b from-white to-[#f0f0f0] p-0 pl-0.5 text-left font-normal text-black">
            {r.n}
          </th>
          {r.v.map((v, k) => (
            <td
              key={columns[k]}
              className={`whitespace-nowrap border-b border-r p-0 px-[3px] ${r.sel ? "border-[#b9d9f3]" : "border-[#c9c9c9]"} ${numeric.has(k) ? "text-right" : "text-left"}`}
            >
              {v ?? <i className={r.sel ? "text-[#dbe9f5]" : "text-[#8c8c8c]"}>NULL</i>}
            </td>
          ))}
          <td className={`border-b ${r.sel ? "border-[#b9d9f3]" : "border-[#c9c9c9]"}`} />
        </tr>
      ))}
    </tbody>
  </table>
);

const Dialog = () => (
  <section
    aria-label="Attribute table"
    className="absolute bottom-[229px] left-[186px] right-[361px] top-[227px] flex border-[6px] border-[#14f52c] pb-1 pl-1.5 pr-1"
  >
    <div className="relative flex min-w-0 flex-1 flex-col border-x border-b border-[#5a5a5a] bg-[#f0f0f0]">
      <header className="flex h-[35px] shrink-0 items-center bg-white pb-0.5 pl-2">
        <Icon name="qgis" className="size-5" />
        <h1 className="flex-1 pl-[9px]">Extracted (location) — Features Total: 8745, Filtered: 8745, Selected: 6980</h1>
        <div className="flex items-center gap-[46px] pr-6">
          <button type="button" aria-label="Minimize" className="h-px w-3 bg-black" />
          <button type="button" aria-label="Maximize" className="size-3 border border-black" />
          <button type="button" aria-label="Close">
            <svg viewBox="0 0 12 12" className="size-3" stroke="#000"><path d="M0 0l12 12M12 0L0 12" /></svg>
          </button>
        </div>
      </header>

      <div className="flex h-[30px] shrink-0 items-center pl-0.5">
        <SmallTool name="pencil" label="Toggle editing" active />
        <SmallTool name="form" label="Multi edit" />
        <SmallTool name="saveGrey" label="Save edits" />
        <SmallTool name="refreshGrey" label="Reload" />
        <Sep className="h-5 w-2" />
        {["multiEdit", "trash", "cut", "copyGrey", "pasteGrey"].map((n) => <SmallTool key={n} name={n} />)}
        <Sep className="h-5 w-2" />
        {["epsSel", "selAll", "invert", "deselSmall", "filter", "moveTop", "panRow", "zoomRow"].map((n) => <SmallTool key={n} name={n} />)}
        <Sep className="h-5 w-2" />
        {["newField", "delField", "editField", "abacus"].map((n) => <SmallTool key={n} name={n} />)}
        <Sep className="h-5 w-2" />
        <SmallTool name="dock" />
        <Sep className="h-5 w-2" />
        {["condFmt", "zoomAct"].map((n) => <SmallTool key={n} name={n} />)}
      </div>

      <div className="flex h-[35px] shrink-0 items-center pb-1 pl-0.5 pr-px pt-0.5 text-[12px]">
        <label className="relative flex h-7 w-[113px] shrink-0 items-center rounded-xs border border-[#b5b5b5] bg-linear-to-b from-white to-[#ececec] pl-[5px]">
          <span className="text-[12px] font-bold text-[#666]">123</span>
          <select aria-label="Field" className="w-20 appearance-none bg-transparent pl-0.5 outline-none">
            <option>maxspeed</option>
          </select>
          <span className="absolute right-2"><Down /></span>
        </label>
        <span className="w-4 text-center">=</span>
        <button type="button" aria-label="Expression" className="flex h-7 w-7 shrink-0 items-center justify-center rounded-xs border border-[#b5b5b5] bg-[#f7f7f7]">
          <svg viewBox="0 0 14 16" className="w-3.5" fill="none" stroke="#444" strokeWidth="2"><path d="M12 4C10 0 2 1 3 5c0 2 2 2.500 5 2.500C4 7.500 2 9 2 11c0 4 8 5 11 1" /></svg>
        </button>
        <label className="ml-2 mr-1 flex h-7 min-w-0 flex-1 items-center border border-[#5b9bd5] bg-white pl-0.5">
          <span className="text-[12px] font-bold text-[#666]">123</span>
          <input aria-label="Value" defaultValue="10" className="min-w-0 flex-1 bg-transparent pl-1 text-[13px] italic outline-none" />
          <button type="button" aria-label="Recent values" className="flex h-full w-6 items-center justify-center bg-[#f5f5f5]"><Down /></button>
        </label>
        <button type="button" className="mr-[3px] h-6 w-[73px] shrink-0 whitespace-nowrap rounded-xs border border-[#b5b5b5] bg-linear-to-b from-white to-[#f0f0f0]">Update All</button>
        <button type="button" className="h-6 w-[109px] shrink-0 whitespace-nowrap rounded-xs border border-[#b5b5b5] bg-linear-to-b from-white to-[#f0f0f0]">Update Selected</button>
      </div>

      <div className="flex min-h-0 flex-1">
        <div className="min-w-0 flex-1 overflow-hidden bg-white">
          <AttributeTable />
        </div>
        <div className="flex w-[17px] shrink-0 flex-col border-l border-[#c0c0c0] bg-[#e7e7e7]">
          <button type="button" aria-label="Scroll up" className="flex h-[17px] items-center justify-center border-b border-[#c0c0c0] bg-[#f7f7f7]"><Up /></button>
          <div className="flex-[310]" />
          <div className="h-[33px] border-y border-[#c0c0c0] bg-[#fafafa]" />
          <div className="flex-[78]" />
          <button type="button" aria-label="Scroll down" className="flex h-[17px] items-center justify-center border-t border-[#c0c0c0] bg-[#fafafa]"><Down /></button>
        </div>
      </div>

      <div className="flex h-[17px] shrink-0 border-y border-[#c0c0c0] bg-[#f0f0f0] pr-[17px]">
        <button type="button" aria-label="Scroll left" className="flex w-[17px] items-center justify-center border-r border-[#c0c0c0] bg-[#fafafa]"><Left /></button>
        <div className="flex-[1218] bg-linear-to-b from-white to-[#f0f0f0]" />
        <div className="flex-[80] border-x border-[#c0c0c0] bg-[#e5e5e5]" />
        <button type="button" aria-label="Scroll right" className="flex w-[17px] items-center justify-center border-r border-[#c0c0c0] bg-[#fafafa]"><Right /></button>
      </div>

      <footer className="flex h-[34px] shrink-0 items-center justify-between pl-0.5 pr-1">
        <button type="button" className="flex h-[27px] items-center gap-1 rounded-xs border border-[#b5b5b5] bg-linear-to-b from-white to-[#ececec] pl-1 text-[13px]">
          <Icon name="table" className="size-4" />
          Show All Features
          <span className="pt-3"><Down className="w-2" /></span>
        </button>
        <div className="flex items-center">
          <button type="button" aria-label="Form view" className="flex size-[27px] items-center justify-center"><Icon name="formView" className="size-4" /></button>
          <button type="button" aria-label="Table view" className="flex size-[27px] items-center justify-center border border-[#b0b0b0] bg-[#d6d6d6]"><Icon name="table" className="size-[18px]" /></button>
        </div>
      </footer>

      <svg aria-hidden="true" viewBox="0 0 66 22" className="absolute left-[228px] top-[71px] w-[66px]">
        <path d="M0 11L36 0v5h30v12H36v5z" fill="#ed1c24" />
      </svg>
      <svg aria-hidden="true" viewBox="0 0 38 48" className="absolute right-[37px] top-4 w-[38px]">
        <path d="M8 0h21v24h9L19 48 0 24h8z" fill="#ed1c24" />
      </svg>
      <svg aria-hidden="true" viewBox="0 0 14 21" className="absolute right-[7px] top-20 w-3.5">
        <path d="M1 1v15l3.500-3 2.500 6.500 2.500-1L7 12h5z" fill="#fff" stroke="#000" />
      </svg>
    </div>
  </section>
);

const Spin = () => (
  <span className="flex h-full w-[17px] flex-col items-center justify-center gap-1 border-l border-[#c8c8c8] bg-[#f8f8f8]">
    <button type="button" aria-label="Increase"><svg viewBox="0 0 10 6" className="w-2"><path d="M0 6h10L5 0z" fill="#555" /></svg></button>
    <button type="button" aria-label="Decrease"><svg viewBox="0 0 10 6" className="w-2"><path d="M0 0h10L5 6z" fill="#555" /></svg></button>
  </span>
);

export default function App() {
  return (
    <div className="relative flex h-screen w-full flex-col overflow-hidden border-b-2 border-[#111] bg-[#f0f0f0] font-['Open_Sans',sans-serif] text-[14px] leading-5 text-[#111]">
      <header className="flex h-[29px] shrink-0 items-center bg-white pl-0.5 text-[#8c8c8c]">
        <Icon name="qgis" className="size-5" />
        <span className="flex-1 pl-[5px]">*network_analysis — QGIS</span>
        <div className="flex items-center gap-[46px] pr-[26px]">
          <button type="button" aria-label="Minimize" className="h-px w-3 bg-[#888]" />
          <button type="button" aria-label="Restore">
            <svg viewBox="0 0 12 12" className="size-3" fill="none" stroke="#888"><path d="M.5 2.500h9v9h-9zM2.500 2.500v-2h9v9h-2" /></svg>
          </button>
          <button type="button" aria-label="Close">
            <svg viewBox="0 0 12 12" className="size-3" stroke="#888"><path d="M0 0l12 12M12 0L0 12" /></svg>
          </button>
        </div>
      </header>
      <nav className="flex h-[25px] shrink-0 items-center gap-[15px] border-b border-[#d0d0d0] bg-[#efefef] pl-3 pt-0.5 text-[#8a8a8a]">
        {menus.map(([m, k]) => (
          <button type="button" key={m}>
            {m.slice(0, k)}<u className="underline-offset-2">{m[k]}</u>{m.slice(k + 1)}
          </button>
        ))}
      </nav>

      <div role="toolbar" aria-label="Project tools" className="flex h-[39px] shrink-0 items-center border-b border-[#b5b5b5] bg-linear-to-b from-[#fafafa] to-[#ededed]">
        <Handle className="w-3.5" />
        {["newDoc", "open", "save", "layout", "layoutMgr", "style"].map((n) => <Tool key={n} name={n} />)}
        <Handle className="w-[18px]" />
        <Tool name="hand" active />
        {["panSel", "zoomIn", "zoomOut", "zoomFull", "zoomSel", "zoomLayer", "zoomNative", "zoomLast", "zoomNext", "newMap", "new3d", "bookmarkNew", "bookmark", "clock", "refresh"].map((n) => <Tool key={n} name={n} />)}
        <Handle className="w-[18px]" />
        <Tool name="select" menu />
        <Tool name="selectValue" menu />
        <Tool name="deselect" menu />
        <Tool name="selectLoc" />
        <Handle className="w-[18px]" />
        <Tool name="identify" />
        <Tool name="abacus" />
        <Tool name="gear" active />
        <Tool name="sigma" />
        <Tool name="table" menu />
        <Tool name="measure" menu />
        <Tool name="tip" />
        <Tool name="action" menu />
      </div>

      <div role="toolbar" aria-label="Layer tools" className="flex h-[40px] shrink-0 items-center border-b-2 border-[#b5b5b5] bg-linear-to-b from-[#fafafa] to-[#ededed]">
        <Handle className="w-3.5" />
        {["dsm", "geopkgNew", "shape", "featherNew", "chip", "mesh"].map((n) => <Tool key={n} name={n} />)}
        <Sep className="h-7 w-2" />
        <Tool name="virtual" />
        <Handle className="w-[26px]" />
        <Tool name="pencils" />
        <Tool name="pencil" active />
        <Tool name="saveEdits" />
        <Tool name="vertex" />
        <Tool name="vertexTool" menu />
        {["form", "trash", "cut", "copy", "paste", "undo", "redo"].map((n) => <Tool key={n} name={n} />)}
        <Handle className="w-[18px]" />
        <Tool name="labelY" />
        <Tool name="diagram" />
        <Sep className="h-7 w-2" />
        <Tool name="labelPin" />
        <Tool name="labelR" />
        <Sep className="h-7 w-2" />
        {["tag1", "tag2", "tag3", "tag4", "tag5"].map((n) => <Tool key={n} name={n} />)}
        <Handle className="w-[18px]" />
        <Tool name="globeSearch" />
        <Handle className="w-[18px]" />
        <Tool name="python" />
        <Handle className="w-[18px]" />
        <Tool name="help" />
        <Handle className="w-5" />
      </div>

      <main className="flex min-h-0 flex-1">
        <aside className="flex w-[295px] shrink-0 flex-col">
          <div className="flex h-[331px] shrink-0 flex-col">
            <PanelTitle>Browser</PanelTitle>
            <div className="flex h-[30px] shrink-0 items-center pb-1 pl-[3px]">
              {["addLayer", "refresh", "filter", "collapse", "info"].map((n) => <SmallTool key={n} name={n} />)}
            </div>
            <div className="flex min-h-0 flex-1 overflow-hidden border border-[#c0c0c0] bg-white">
              <ul className="min-w-0 flex-1">
                {browserItems.map((b) => (
                  <li key={b.text} className={`flex h-[22px] items-center whitespace-nowrap ${b.child ? "pl-[21px]" : "pl-1"}`}>
                    <span className="flex w-4 shrink-0 items-center">
                      {b.arrow === "down" && <Down />}
                      {b.arrow === "right" && <span className="pl-0.5"><Right /></span>}
                    </span>
                    <Icon name={b.icon} className="size-5" />
                    <span className="pl-1.5">{b.text}</span>
                  </li>
                ))}
              </ul>
              <div className="w-[17px] shrink-0 border-l border-[#c0c0c0] bg-[#f6f6f6]">
                <button type="button" aria-label="Scroll up" className="flex h-4 w-full items-center justify-center border-b border-[#c0c0c0]"><Up /></button>
              </div>
            </div>
          </div>
          <div className="flex min-h-0 flex-1 flex-col pt-2">
            <PanelTitle buttons={false}>Layers</PanelTitle>
            <div className="flex h-[29px] shrink-0 items-center pb-1 pl-[3px]">
              {["brush", "groups", "eye", "filterArrow", "eps"].map((n) => <SmallTool key={n} name={n} />)}
              <span className="flex w-4 justify-center"><Down /></span>
              {["expand", "collapse"].map((n) => <SmallTool key={n} name={n} />)}
            </div>
            <ul className="min-h-0 flex-1 overflow-hidden border border-[#c0c0c0] bg-white pt-px">
              {layers.map((l, i) => (
                <li key={l.text} className={`flex h-[22px] items-center whitespace-nowrap pl-7 font-bold ${i === 0 ? "bg-[#f3f3f3]" : ""} ${l.on ? "" : "italic text-[#8a8a8a]"}`}>
                  <Tick on={l.on} label={l.text} />
                  <span className="ml-[7px] mr-1 flex size-[18px] items-center justify-center">
                    {l.kind === "edit" && <Icon name="lineEdit" className="size-[18px]" />}
                    {l.kind === "outline" && <span className="size-full border-2 border-[#3a76ab] bg-white" />}
                    {l.kind === "line" && <span className="h-0.5 w-full bg-[#e2a53c]" />}
                    {l.kind === "fill" && <span className="size-full border border-[#8c4a63] bg-[#dd5a86]" />}
                  </span>
                  <span className={i === 0 ? "underline" : "pl-[3px]"}>{l.text}</span>
                </li>
              ))}
            </ul>
          </div>
        </aside>

        <div className="ml-2 min-w-0 flex-1 overflow-hidden border-x border-b border-[#b5b5b5] bg-white">
          <MapCanvas />
        </div>

        <aside className="ml-[7px] flex w-[372px] shrink-0 flex-col">
          <PanelTitle>Processing Toolbox</PanelTitle>
          <div className="flex h-[29px] shrink-0 items-center pb-[3px] pl-[3px]">
            {["toolGear", "pythonSmall", "clock", "log"].map((n) => <SmallTool key={n} name={n} />)}
            <Sep className="h-4 w-2" />
            <SmallTool name="editPlace" />
            <Sep className="h-4 w-2" />
            <SmallTool name="wrench" />
          </div>
          <label className="flex h-[27px] shrink-0 items-center border border-[#c0c0c0] bg-white pl-2">
            <Icon name="search" className="size-4" />
            <input aria-label="Search" placeholder="Search..." className="min-w-0 flex-1 bg-transparent pl-2 text-[13px] outline-none placeholder:text-[#8a8a8a]" />
          </label>
          <ul className="min-h-0 flex-1 overflow-hidden border border-[#c0c0c0] bg-white">
            {toolboxItems.map(([icon, text]) => (
              <li key={text} className="flex h-[22px] items-center whitespace-nowrap pl-2.5">
                <span className="flex w-[18px] shrink-0"><Right /></span>
                <Icon name={icon} className="size-[18px]" />
                <span className="pl-2">{text}</span>
              </li>
            ))}
          </ul>
        </aside>
      </main>

      <footer className="flex h-[31px] shrink-0 items-center pl-[5px] pr-2 pt-[3px] text-[12px]">
        <label className="flex h-[26px] w-[230px] items-center rounded-xs border border-[#b5b5b5] bg-white pl-2">
          <Icon name="search" className="size-4" />
          <input aria-label="Locate" placeholder="Type to locate (Ctrl+K)" className="min-w-0 flex-1 bg-transparent pl-2 text-[13px] outline-none placeholder:text-[#8a8a8a]" />
        </label>
        <span className="flex-1 pl-[9px]">6980 features selected on layer Extracted (location).</span>
        <label htmlFor="coord">Coordinate</label>
        <input id="coord" defaultValue="4.9609,47.3651" className="ml-1 h-[26px] w-[103px] rounded-xs border border-[#b5b5b5] bg-white px-1.5 text-[13px] outline-none" />
        <button type="button" aria-label="Toggle extents" className="ml-1 mr-3.5"><Icon name="mouse" className="size-5" /></button>
        <label htmlFor="scale">Scale</label>
        <span className="relative ml-1 flex h-[26px] w-[92px] items-center rounded-xs border border-[#b5b5b5] bg-white text-[13px]">
          <select id="scale" className="w-full appearance-none bg-transparent pl-[3px] outline-none"><option>1:28951</option></select>
          <span className="absolute right-2"><Down /></span>
        </span>
        <button type="button" aria-label="Lock scale" className="ml-3 mr-2"><Icon name="lock" className="size-[18px]" /></button>
        <label htmlFor="mag">Magnifier</label>
        <span className="ml-1 flex h-[26px] w-[92px] items-center rounded-xs border border-[#b5b5b5] bg-white">
          <input id="mag" defaultValue="100%" className="min-w-0 flex-1 bg-transparent pl-1 text-[13px] outline-none" />
          <Spin />
        </span>
        <label htmlFor="rot" className="ml-2">Rotation</label>
        <span className="ml-2.5 flex h-[26px] w-[87px] items-center rounded-xs border border-[#b5b5b5] bg-white">
          <input id="rot" defaultValue="0.0 °" className="min-w-0 flex-1 bg-transparent pl-1 text-[13px] outline-none" />
          <Spin />
        </span>
        <label className="ml-2 flex items-center gap-1.5"><Tick on label="Render" />Render</label>
        <button type="button" className="ml-4 mr-6 flex items-center gap-0.5 text-[13px]"><Icon name="globe" className="size-[18px]" />EPSG:4326</button>
        <button type="button" aria-label="Messages"><Icon name="bubble" className="size-5" /></button>
      </footer>

      <Dialog />
    </div>
  );
}
